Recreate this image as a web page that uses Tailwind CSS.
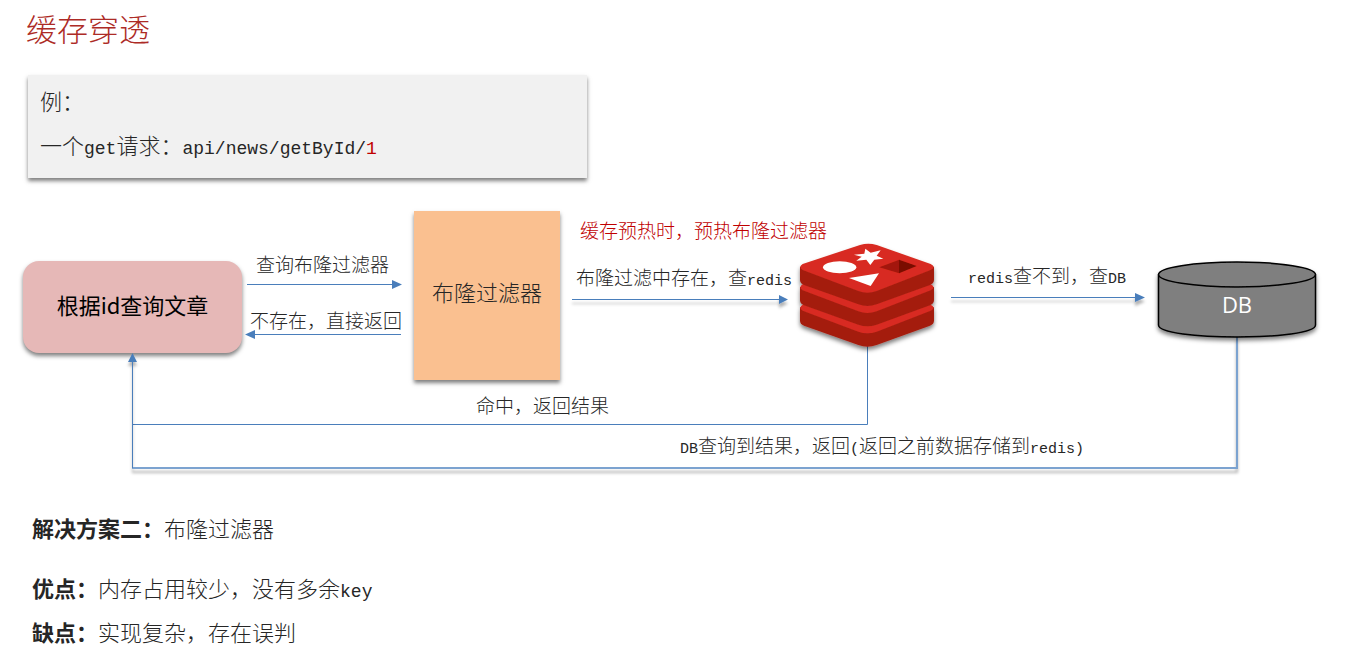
<!DOCTYPE html>
<html lang="zh-CN">
<head>
<meta charset="utf-8">
<meta name="viewport" content="width=device-width, initial-scale=1">
<title>缓存穿透</title>
<script src="https://cdn.jsdelivr.net/npm/@tailwindcss/browser@4"></script>
</head>
<body class="bg-white font-['Liberation_Mono','Noto_Sans_CJK_SC',monospace] font-light text-[#262626]">
<main class="flex flex-col">
  <header class="px-[26px] pt-[6px]">
    <h1 class="font-['Noto_Sans_CJK_SC',sans-serif] text-[31px] leading-[44px] font-light text-[#ad2b26]">缓存穿透</h1>
  </header>

  <section class="mt-[25px] ml-7 mr-4 max-w-[559px] bg-[#f1f1f1] px-3 pt-2 pb-[7px] text-[22px] leading-[44px] shadow-[0_3px_4px_rgba(0,0,0,0.5)]">
    <p>例：</p>
    <p>一个<span class="text-[18px]">get</span>请求：<span class="text-[18px]">api/news/getById/<span class="text-[#c00000]">1</span></span></p>
  </section>

  <section class="relative mt-6 h-[298px] text-[19px] leading-7 whitespace-nowrap" aria-label="布隆过滤器查询流程">
    <div class="absolute left-[23px] top-[59px] flex h-[92px] w-[219px] items-center justify-center rounded-[16px] bg-[#e6b8b7] pb-[6px] font-['Noto_Sans_CJK_SC',sans-serif] text-[22px] font-normal text-black shadow-[0_3px_4px_rgba(0,0,0,0.5)]">根据id查询文章</div>
    <div class="absolute left-[414px] top-[9px] flex h-[169px] w-[146px] items-center justify-center bg-[#fac090] text-[22px] shadow-[0_3px_4px_rgba(0,0,0,0.5)]">布隆过滤器</div>

    <svg class="absolute left-0 top-0 h-[298px] w-[1353px]" viewBox="0 202 1353 298" fill="none" aria-hidden="true">
      <defs>
        <filter id="soft" filterUnits="userSpaceOnUse" x="0" y="202" width="1353" height="298">
          <feDropShadow dx="0" dy="4" stdDeviation="1.5" flood-color="#000" flood-opacity="0.3"/>
        </filter>
        <filter id="deep" filterUnits="userSpaceOnUse" x="780" y="202" width="573" height="298">
          <feDropShadow dx="0" dy="3" stdDeviation="2" flood-color="#000" flood-opacity="0.5"/>
        </filter>
        <g id="layer">
          <path fill="#a41e11" d="M60 140V180Q60 190 72 195L235 253Q262 263 290 253L450 195Q462 190 462 180V140Z"/>
          <path fill="#d82c20" d="M68 132L240 75Q265 68 290 75L452 132Q470 141 452 150L290 213Q262 223 235 213L68 150Q54 141 68 132Z"/>
        </g>
      </defs>
      <g stroke="#4a7ebb">
        <path d="M247 284.500H394M401 334.500H254"/>
        <path d="M867.500 345V424.500H132.500"/>
      </g>
      <path fill="#4a7ebb" d="M392 280L402 284.500L392 289ZM255 330L245 334.500L255 339Z"/>
      <g filter="url(#soft)">
        <path stroke="#4a7ebb" d="M572 299.500H780M951 297.500H1137"/>
        <path fill="#4a7ebb" d="M779 295L788 299.500L779 304ZM1135 293L1145 297.500L1135 302ZM128 362L132.500 353L137 362Z"/>
        <path stroke="#4a7ebb" d="M132.500 360V467"/>
        <path stroke="#7ba3d0" stroke-width="2" d="M1237 336V468H132"/>
      </g>
      <path stroke="#4a7ebb" d="M132.500 360V468"/>
      <g filter="url(#deep)">
        <g transform="translate(780 220) scale(0.3333)">
          <use href="#layer" y="122"/>
          <use href="#layer" y="61"/>
          <use href="#layer"/>
          <ellipse cx="179" cy="142" rx="50" ry="18" fill="#fff"/>
          <path fill="#fff" d="M256 86L272 98L302 91L290 107L310 116L283 119L271 135L259 119L229 122L245 110L222 104L253 101Z"/>
          <path fill="#fff" d="M207 174L297 160L272 198Z"/>
          <path fill="#a3170b" d="M358 119L298 142L358 160Z"/>
          <path fill="#7a0c00" d="M357 119L410 138L357 160Z"/>
        </g>
      </g>
      <g filter="url(#deep)" stroke="#000" stroke-width="1.5" fill="#7f7f7f">
        <path d="M1158.500 274.500V325C1158.500 341 1315.500 341 1315.500 325V274.500"/>
        <ellipse cx="1237" cy="274.500" rx="78.500" ry="12.500"/>
      </g>
    </svg>

    <span class="absolute left-[1158px] top-[88px] w-[158px] text-center font-['Open_Sans','Noto_Sans',sans-serif] text-[22px] font-normal text-white">DB</span>
    <span class="absolute left-[256px] top-[51px]">查询布隆过滤器</span>
    <span class="absolute left-[250px] top-[107px]">不存在，直接返回</span>
    <span class="absolute left-[580px] top-[17px] text-[#c00000]">缓存预热时，预热布隆过滤器</span>
    <span class="absolute left-[576px] top-[64px]">布隆过滤中存在，查<span class="text-[15px]">redis</span></span>
    <span class="absolute left-[968px] top-[62px]"><span class="text-[15px]">redis</span>查不到，查<span class="text-[15px]">DB</span></span>
    <span class="absolute left-[476px] top-[192px]">命中，返回结果</span>
    <span class="absolute left-[680px] top-[232px]"><span class="text-[15px]">DB</span>查询到结果，返回<span class="text-[15px]">(</span>返回之前数据存储到<span class="text-[15px]">redis)</span></span>
  </section>

  <section class="flex flex-col px-8 pt-[10px] text-[22px] leading-[44px]">
    <p><strong class="font-bold">解决方案二：</strong>布隆过滤器</p>
    <p class="mt-4"><strong class="font-bold">优点：</strong>内存占用较少，没有多余<span class="text-[18px]">key</span></p>
    <p><strong class="font-bold">缺点：</strong>实现复杂，存在误判</p>
  </section>
</main>
</body>
</html>
